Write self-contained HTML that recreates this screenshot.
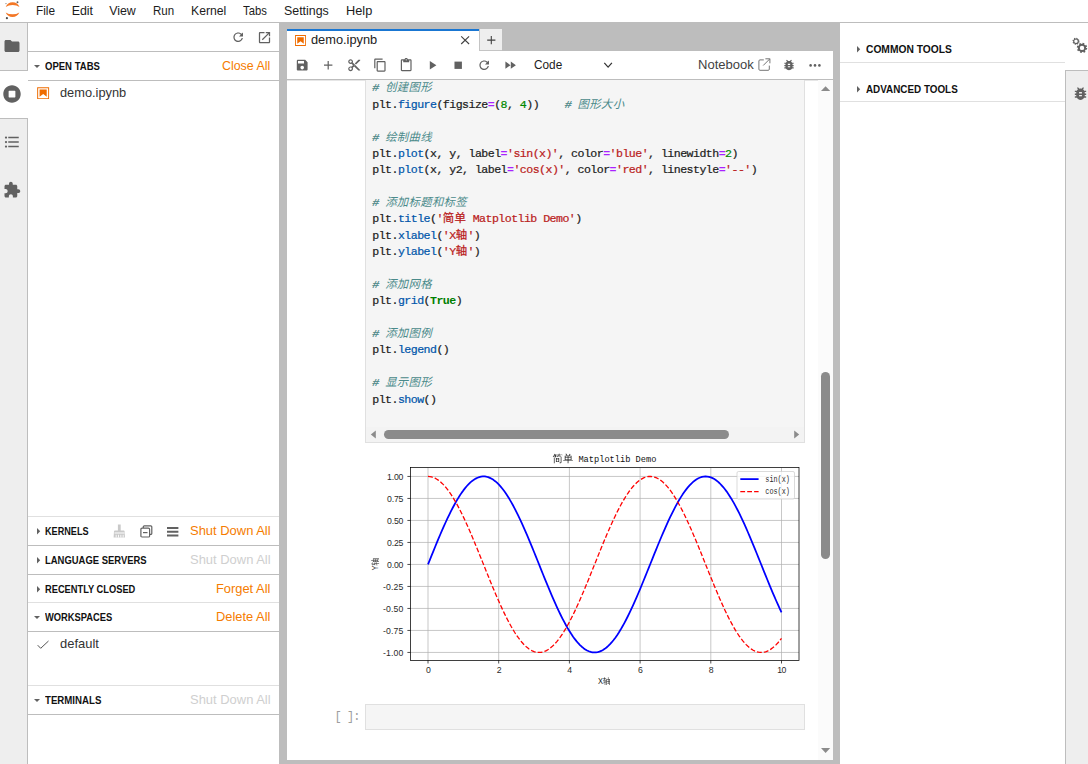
<!DOCTYPE html>
<html lang="zh">
<head>
<meta charset="utf-8">
<title>demo.ipynb - JupyterLab</title>
<style>
*{box-sizing:border-box;margin:0;padding:0}
html,body{width:1088px;height:764px;overflow:hidden;background:#fff}
body{position:relative;font-family:"Liberation Sans","Noto Sans CJK SC",sans-serif;color:#212121;font-size:12px}
.abs{position:absolute}
.t{position:absolute;white-space:nowrap;line-height:1}
.hl{position:absolute;height:1px}
.vl{position:absolute;width:1px}
svg{position:absolute;overflow:visible}
/* menu */
#menubar{position:absolute;left:0;top:0;width:1088px;height:23px;background:#fff;border-bottom:1px solid #bdbdbd}
.mi{position:absolute;top:4.2px;font-size:12.4px;line-height:14px;color:#1c1c1c;white-space:nowrap}
/* side bars */
#lbar{position:absolute;left:0;top:23px;width:28px;height:741px;background:#eeeeee;border-right:1px solid #bdbdbd}
#lactive{position:absolute;left:0;top:70px;width:28px;height:49px;background:#fff;border-top:1px solid #bdbdbd;border-bottom:1px solid #bdbdbd}
#rbar{position:absolute;left:1065px;top:23px;width:23px;height:741px;background:#eeeeee;border-left:1px solid #bdbdbd}
#ractive{position:absolute;left:1065px;top:23px;width:23px;height:48px;background:#fff;border-bottom:1px solid #bdbdbd}
/* panels */
#dock{position:absolute;left:279px;top:23px;width:561px;height:741px;background:#bdbdbd}
#nb{position:absolute;left:287px;top:51px;width:546px;height:709px;background:#fff}
.hdr{position:absolute;font-weight:bold;font-size:10.3px;color:#111;letter-spacing:0;white-space:nowrap;line-height:12px}
.act{position:absolute;font-size:12.6px;color:#f57c00;white-space:nowrap;line-height:14px}
.act.dis{color:#cfcfcf}
.it{position:absolute;font-size:12.4px;color:#333;white-space:nowrap;line-height:14px}
/* code */
#ed{position:absolute;left:365px;top:70px;width:440px;height:373px;background:#f5f5f5;border:1px solid #e0e0e0}
#code{position:absolute;left:372.3px;top:80.45px;font-family:"Liberation Mono","Noto Sans CJK SC",monospace;font-size:11.6px;letter-spacing:-0.545px;-webkit-text-stroke:0.22px;line-height:16.37px;color:#212121;white-space:pre}
#code i{color:#408080;font-style:italic}
#code b{font-weight:normal;letter-spacing:.3px;font-size:11.4px;-webkit-text-stroke:0}
#code i b{color:#4a8a8a}
#code .p{color:#0055aa}
#code .s{color:#ba2121}
#code .n{color:#008800}
#code .o{color:#aa22ff;font-weight:bold;-webkit-text-stroke:0}
#code .k{color:#008000;font-weight:bold;-webkit-text-stroke:0}
#code .s b{-webkit-text-stroke:0.25px}
</style>
<style>
.mi,.hdr,.act,.it,#pr{transform-origin:0 0}
#m1{transform:scaleX(.955)}#m4{transform:scaleX(.93)}#m5{transform:scaleX(.985)}#m6{transform:scaleX(.91)}#m8{transform:scaleX(1.03)}
#h1{transform:scaleX(.925)}#h2{transform:scaleX(.885)}#h3{transform:scaleX(.917)}#h4{transform:scaleX(.902)}#h5{transform:scaleX(.907)}#h6{transform:scaleX(.938)}#h7{transform:scaleX(.995)}#h8{transform:scaleX(.958)}
#a1{transform:scaleX(.985)}#i1,#tb1{transform:scaleX(1.033)}#i2{transform:scaleX(1.045)}
#a2,#a3,#a6{transform:scaleX(1.028)}#a4,#a5{transform:scaleX(1.022)}
#tc{transform:scaleX(.93)}#tn{transform:scaleX(1.027)}
</style>
</head>
<body>
<div id="menubar">
<svg style="left:4px;top:0.300px" width="18" height="21" viewBox="0 0 18 21">
  <path d="M1.7 7.0 A7.4 7.4 0 0 1 15.5 7.0 A9.5 6.2 0 0 0 1.7 7.0 Z" fill="#f37726"/>
  <path d="M1.7 12.4 A7.4 7.4 0 0 0 15.3 12.4 A9.5 6.2 0 0 1 1.7 12.4 Z" fill="#f37726"/>
  <circle cx="13.5" cy="2.2" r="0.95" fill="#616161"/>
  <circle cx="2.0" cy="3.6" r="0.6" fill="#767677"/>
  <circle cx="2.9" cy="18.2" r="1.1" fill="#4e4e4e"/>
</svg>
<span class="mi" style="left:35.700px" id="m1">File</span>
<span class="mi" style="left:71.7px" id="m2">Edit</span>
<span class="mi" style="left:109.2px" id="m3">View</span>
<span class="mi" style="left:153px" id="m4">Run</span>
<span class="mi" style="left:191.2px" id="m5">Kernel</span>
<span class="mi" style="left:243px" id="m6">Tabs</span>
<span class="mi" style="left:284px" id="m7">Settings</span>
<span class="mi" style="left:345.5px" id="m8">Help</span>
</div>
<div id="lbar"></div>
<div id="lactive"></div>
<!-- left activity icons -->
<svg style="left:3.1px;top:36.9px" width="18" height="18" viewBox="0 0 24 24"><path fill="#616161" d="M10 4H4c-1.1 0-1.99.9-1.99 2L2 18c0 1.1.9 2 2 2h16c1.1 0 2-.9 2-2V8c0-1.1-.9-2-2-2h-8l-2-2z"/></svg>
<svg style="left:3.2px;top:84.9px" width="18" height="18" viewBox="0 0 512 512"><path fill="#616161" d="M256 8C119 8 8 119 8 256s111 248 248 248 248-111 248-248S393 8 256 8zm96 328c0 8.8-7.2 16-16 16H176c-8.8 0-16-7.2-16-16V176c0-8.8 7.2-16 16-16h160c8.8 0 16 7.2 16 16v160z"/></svg>
<svg style="left:3px;top:133px" width="18" height="18" viewBox="0 0 24 24"><path fill="#616161" d="M7,5H21V7H7V5M7,13V11H21V13H7M4,4.5A1.5,1.5 0 0,1 5.5,6A1.5,1.5 0 0,1 4,7.5A1.5,1.5 0 0,1 2.5,6A1.5,1.5 0 0,1 4,4.5M4,10.5A1.5,1.5 0 0,1 5.5,12A1.5,1.5 0 0,1 4,13.5A1.5,1.5 0 0,1 2.5,12A1.5,1.5 0 0,1 4,10.5M7,19V17H21V19H7M4,16.5A1.5,1.5 0 0,1 5.5,18A1.5,1.5 0 0,1 4,19.5A1.5,1.5 0 0,1 2.5,18A1.5,1.5 0 0,1 4,16.5Z"/></svg>
<svg style="left:2.6px;top:181.2px" width="18" height="18" viewBox="0 0 24 24"><path fill="#616161" d="M20.5 11H19V7c0-1.1-.9-2-2-2h-4V3.5C13 2.12 11.88 1 10.5 1S8 2.12 8 3.5V5H4c-1.1 0-1.99.9-1.99 2v3.8H3.5c1.49 0 2.7 1.21 2.7 2.7s-1.21 2.7-2.7 2.7H2V20c0 1.1.9 2 2 2h3.8v-1.5c0-1.49 1.21-2.7 2.7-2.7 1.49 0 2.7 1.21 2.7 2.7V22H17c1.1 0 2-.9 2-2v-4h1.5c1.380 0 2.5-1.12 2.5-2.5S21.88 11 20.5 11z"/></svg>

<!-- left side panel (running sessions) -->
<div class="hl" style="left:28px;top:51px;width:251px;background:#bdbdbd"></div>
<svg style="left:231px;top:29.8px" width="14.4" height="14.4" viewBox="0 0 18 18"><path fill="#616161" d="M9 13.5c-2.49 0-4.5-2.01-4.5-4.5S6.51 4.500 9 4.5c1.24 0 2.36.52 3.17 1.33L10 8h5V3l-1.76 1.76C12.15 3.68 10.66 3 9 3 5.69 3 3.010 5.69 3.010 9S5.69 15 9 15c2.97 0 5.43-2.16 5.9-5h-1.52c-.46 2-2.24 3.5-4.38 3.5z"/></svg>
<svg style="left:256.9px;top:29.6px" width="15" height="15" viewBox="0 0 24 24"><path fill="#616161" d="M19 19H5V5h7V3H5c-1.11 0-2 .9-2 2v14c0 1.1.89 2 2 2h14c1.1 0 2-.9 2-2v-7h-2v7zM14 3v2h3.59l-9.83 9.83 1.41 1.41L19 6.410V10h2V3h-7z"/></svg>

<!-- OPEN TABS -->
<svg style="left:34px;top:65px" width="6" height="3" viewBox="0 0 6 3"><path fill="#616161" d="M0 0h6L3 3z"/></svg>
<span class="hdr" style="left:44.6px;top:60.8px" id="h1">OPEN TABS</span>
<span class="act" style="left:221.8px;top:58.6px" id="a1">Close All</span>
<div class="hl" style="left:28px;top:80px;width:251px;background:#bdbdbd"></div>
<svg style="left:35.8px;top:85.7px" width="14.3" height="14.3" viewBox="0 0 22 22"><path fill="#ef6c00" d="M18.7 3.3v15.4H3.3V3.3h15.4m1.5-1.500H1.800v18.3h18.3l.1-18.3z"/><path fill="#ef6c00" d="M16.500 16.500l-5.400-4.300-5.600 4.300v-11h11z"/></svg>
<span class="it" style="left:59.8px;top:85.8px" id="i1">demo.ipynb</span>

<!-- KERNELS -->
<div class="hl" style="left:28px;top:516px;width:251px;background:#e0e0e0"></div>
<svg style="left:36.8px;top:528px" width="3.2" height="6.4" viewBox="0 0 3 6"><path fill="#616161" d="M0 0v6l3-3z"/></svg>
<span class="hdr" style="left:44.6px;top:525.8px" id="h2">KERNELS</span>
<svg style="left:113px;top:524px" width="13" height="14" viewBox="0 0 13 14"><path fill="#c9c9c9" d="M4.900 0.600h2.800v6.200h-2.800zM1.900 6.400h8.800q.8 0 .9 .8l.4 6.300h-11.400l.4-6.300q.1-.8 .9-.8z"/><path fill="#fff" d="M2.700 10.800h.9v2.700h-.9zM5.100 10.800h.9v2.700h-.9zM7.400 10.800h.9v2.700h-.9zM9.700 10.800h.9v2.700h-.9zM1.500 8.600h10v.8h-10z"/></svg>
<svg style="left:139.500px;top:525px" width="13" height="13" viewBox="0 0 13 13"><path fill="none" stroke="#616161" stroke-width="1.200" d="M3.300 3.100v-1.300q0-1 1-1h6.500q1 0 1 1v6.600q0 1-1 1h-1.200"/><rect x="0.900" y="3.100" width="8.700" height="8.900" rx="1.100" fill="#fff" stroke="#616161" stroke-width="1.200"/><path stroke="#616161" stroke-width="1.200" d="M3 7.600h4.500"/></svg>
<svg style="left:166.600px;top:526.600px" width="11.400" height="9.600" viewBox="0 0 11.400 9.600"><path fill="#616161" d="M0 0h11.400v2.100H0zM0 3.700h11.400v2.100H0zM0 7.400h11.400v2.100H0z"/></svg>
<span class="act" style="left:190.400px;top:523.600px" id="a2">Shut Down All</span>
<div class="hl" style="left:28px;top:545px;width:251px;background:#bdbdbd"></div>

<!-- LANGUAGE SERVERS -->
<svg style="left:36.8px;top:557px" width="3.2" height="6.4" viewBox="0 0 3 6"><path fill="#616161" d="M0 0v6l3-3z"/></svg>
<span class="hdr" style="left:44.6px;top:554.8px" id="h3">LANGUAGE SERVERS</span>
<span class="act dis" style="left:190.400px;top:552.600px" id="a3">Shut Down All</span>
<div class="hl" style="left:28px;top:574px;width:251px;background:#bdbdbd"></div>

<!-- RECENTLY CLOSED -->
<svg style="left:36.8px;top:585.500px" width="3.2" height="6.4" viewBox="0 0 3 6"><path fill="#616161" d="M0 0v6l3-3z"/></svg>
<span class="hdr" style="left:44.6px;top:583.5px" id="h4">RECENTLY CLOSED</span>
<span class="act" style="left:216.200px;top:582.100px" id="a4">Forget All</span>
<div class="hl" style="left:28px;top:602px;width:251px;background:#e0e0e0"></div>

<!-- WORKSPACES -->
<svg style="left:34px;top:616px" width="6" height="3" viewBox="0 0 6 3"><path fill="#616161" d="M0 0h6L3 3z"/></svg>
<span class="hdr" style="left:44.6px;top:611.8px" id="h5">WORKSPACES</span>
<span class="act" style="left:216.200px;top:609.600px" id="a5">Delete All</span>
<div class="hl" style="left:28px;top:631px;width:251px;background:#bdbdbd"></div>
<svg style="left:37px;top:639.500px" width="13" height="10" viewBox="0 0 13 10"><path fill="none" stroke="#555" stroke-width="1" d="M0.700 5.200l3 3.100l7.800-7.300"/></svg>
<span class="it" style="left:59.8px;top:636.800px" id="i2">default</span>

<!-- TERMINALS -->
<div class="hl" style="left:28px;top:685px;width:251px;background:#e0e0e0"></div>
<svg style="left:34px;top:699px" width="6" height="3" viewBox="0 0 6 3"><path fill="#616161" d="M0 0h6L3 3z"/></svg>
<span class="hdr" style="left:44.6px;top:694.8px" id="h6">TERMINALS</span>
<span class="act dis" style="left:190.400px;top:692.600px" id="a6">Shut Down All</span>
<div class="hl" style="left:28px;top:714px;width:251px;background:#bdbdbd"></div>
<div id="dock"></div>
<!-- tab -->
<div class="abs" style="left:287px;top:29px;width:192px;height:22px;background:#fff;border-top:2px solid #1976d2"></div>
<div class="abs" style="left:479px;top:29px;width:23px;height:22px;background:#eeeeee;border-left:1px solid #c4c4c4;border-bottom:1px solid #c4c4c4"></div>
<svg style="left:293.700px;top:33.950px" width="13" height="13" viewBox="0 0 22 22"><path fill="#ef6c00" d="M18.7 3.3v15.4H3.3V3.3h15.4m1.5-1.500H1.800v18.3h18.3l.1-18.3z"/><path fill="#ef6c00" d="M16.500 16.500l-5.400-4.300-5.600 4.300v-11h11z"/></svg>
<span class="it" style="left:311px;top:33.400px;color:#222" id="tb1">demo.ipynb</span>
<svg style="left:460px;top:35px" width="10" height="10" viewBox="0 0 10 10"><path stroke="#424242" stroke-width="1.100" fill="none" d="M1.200 1.300l7.900 7.700M9.100 1.300l-7.900 7.700"/></svg>
<svg style="left:486px;top:35px" width="10" height="10" viewBox="0 0 10 10"><path stroke="#424242" stroke-width="1.100" fill="none" d="M5.300 1v8.200M1.200 5.100h8.200"/></svg>

<!-- notebook panel -->
<div id="nb"></div>
<div class="hl" style="left:287px;top:79px;width:546px;background:#bdbdbd"></div>
<div class="hl" style="left:287px;top:80px;width:546px;background:#e6e6e6"></div>

<!-- toolbar icons -->
<svg style="left:295px;top:58.100px" width="14.400" height="14.400" viewBox="0 0 24 24"><path fill="#616161" d="M17 3H5c-1.110 0-2 .9-2 2v14c0 1.100.890 2 2 2h14c1.100 0 2-.9 2-2V7l-4-4zm-5 16c-1.660 0-3-1.340-3-3s1.340-3 3-3 3 1.340 3 3-1.340 3-3 3zm3-10H5V5h10v4z"/></svg>
<svg style="left:320.800px;top:58.300px" width="14.400" height="14.400" viewBox="0 0 24 24"><path fill="#616161" d="M19 13h-6v6h-2v-6H5v-2h6V5h2v6h6v2z"/></svg>
<svg style="left:347px;top:57.800px" width="14.400" height="14.400" viewBox="0 0 24 24"><path fill="#616161" d="M9.640 7.640c.23-.5.360-1.050.360-1.640 0-2.210-1.790-4-4-4S2 3.790 2 6s1.790 4 4 4c.59 0 1.140-.13 1.640-.36L10 12l-2.360 2.360C7.140 14.130 6.590 14 6 14c-2.210 0-4 1.790-4 4s1.790 4 4 4 4-1.790 4-4c0-.59-.13-1.140-.36-1.640L12 14l7 7h3v-1L9.640 7.640zM6 8c-1.100 0-2-.89-2-2s.9-2 2-2 2 .89 2 2-.9 2-2 2zm0 12c-1.100 0-2-.89-2-2s.9-2 2-2 2 .89 2 2-.9 2-2 2zm6-7.500c-.28 0-.5-.22-.5-.5s.22-.5.5-.5.5.22.5.5-.22.5-.5.5zM19 3l-6 6 2 2 7-7V3z"/></svg>
<svg style="left:373px;top:58.300px" width="14.400" height="14.400" viewBox="0 0 24 24"><path fill="#616161" d="M16 1H4c-1.100 0-2 .9-2 2v14h2V3h12V1zm3 4H8c-1.100 0-2 .9-2 2v14c0 1.100.9 2 2 2h11c1.100 0 2-.9 2-2V7c0-1.100-.9-2-2-2zm0 16H8V7h11v14z"/></svg>
<svg style="left:399px;top:58.200px" width="14.400" height="14.400" viewBox="0 0 24 24"><path fill="#616161" d="M19 2h-4.180C14.400.84 13.300 0 12 0c-1.300 0-2.400.84-2.820 2H5c-1.100 0-2 .9-2 2v16c0 1.100.9 2 2 2h14c1.100 0 2-.9 2-2V4c0-1.100-.9-2-2-2zm-7 0c.55 0 1 .45 1 1s-.45 1-1 1-1-.45-1-1 .45-1 1-1zm7 18H5V4h2v3h10V4h2v16z"/></svg>
<svg style="left:424.900px;top:58.050px" width="14.400" height="14.400" viewBox="0 0 24 24"><path fill="#616161" d="M8 5v14l11-7z"/></svg>
<svg style="left:451px;top:57.950px" width="14.400" height="14.400" viewBox="0 0 24 24"><path fill="#616161" d="M5.800 6h12.400v12.200H5.800z"/></svg>
<svg style="left:477px;top:57.800px" width="14.400" height="14.400" viewBox="0 0 18 18"><path fill="#616161" d="M9 13.500c-2.490 0-4.500-2.010-4.500-4.500S6.510 4.500 9 4.500c1.240 0 2.360.52 3.170 1.330L10 8h5V3l-1.760 1.760C12.150 3.680 10.660 3 9 3 5.690 3 3.010 5.690 3.010 9S5.690 15 9 15c2.970 0 5.430-2.160 5.900-5h-1.520c-.46 2-2.240 3.500-4.380 3.500z"/></svg>
<svg style="left:502.700px;top:58.050px" width="14.400" height="14.400" viewBox="0 0 24 24"><path fill="#616161" d="M4 18l8.500-6L4 6v12zm9-12v12l8.500-6L13 6z"/></svg>
<span class="it" style="left:534.400px;top:57.700px;font-size:12.700px;color:#1c1c1c" id="tc">Code</span>
<svg style="left:603px;top:61px" width="10" height="8" viewBox="0 0 10 8"><path stroke="#333" stroke-width="1.250" fill="none" d="M1.300 1.900l3.800 4.200l3.800-4.200"/></svg>
<span class="it" style="left:697.800px;top:57.700px;font-size:12.700px;color:#424242" id="tn">Notebook</span>
<svg style="left:758px;top:58px" width="13" height="13" viewBox="0 0 13 13"><path stroke="#757575" stroke-width="1" fill="none" d="M5.800 1.900H2q-1.100 0-1.100 1.100v8.200q0 1.100 1.100 1.100h8.200q1.100 0 1.100-1.100V7.600M7.400 0.800h4.500v4.500M11.800 0.900L5.200 7.500"/></svg>
<svg style="left:781.900px;top:58.300px" width="14" height="14" viewBox="0 0 24 24"><path fill="#616161" d="M20 8h-2.810c-.45-.78-1.070-1.450-1.820-1.960L17 4.410 15.590 3l-2.170 2.170C12.960 5.060 12.490 5 12 5c-.49 0-.96.060-1.410.17L8.410 3 7 4.410l1.620 1.630C7.880 6.550 7.260 7.220 6.810 8H4v2h2.090c-.05.33-.09.66-.09 1v1H4v2h2v1c0 .34.040.67.090 1H4v2h2.810c1.040 1.790 2.970 3 5.190 3s4.150-1.210 5.190-3H20v-2h-2.090c.05-.33.090-.66.090-1v-1h2v-2h-2v-1c0-.34-.04-.67-.09-1H20V8zm-6 8h-4v-2h4v2zm0-4h-4v-2h4v2z"/></svg>
<svg style="left:808px;top:63px" width="14" height="5" viewBox="0 0 14 5"><circle cx="2.600" cy="2.400" r="1.300" fill="#616161"/><circle cx="7" cy="2.400" r="1.300" fill="#616161"/><circle cx="11.400" cy="2.400" r="1.300" fill="#616161"/></svg>
<div class="abs" style="left:365px;top:80px;width:440px;height:363px;background:#f5f5f5;border:1px solid #e0e0e0;border-top:none"></div>
<div id="code"><i># <b>创建图形</b></i>
plt.<span class="p">figure</span>(figsize<span class="o">=</span>(<span class="n">8</span>, <span class="n">4</span>))    <i># <b>图形大小</b></i>

<i># <b>绘制曲线</b></i>
plt.<span class="p">plot</span>(x, y, label<span class="o">=</span><span class="s">'sin(x)'</span>, color<span class="o">=</span><span class="s">'blue'</span>, linewidth<span class="o">=</span><span class="n">2</span>)
plt.<span class="p">plot</span>(x, y2, label<span class="o">=</span><span class="s">'cos(x)'</span>, color<span class="o">=</span><span class="s">'red'</span>, linestyle<span class="o">=</span><span class="s">'--'</span>)

<i># <b>添加标题和标签</b></i>
plt.<span class="p">title</span>(<span class="s">'<b>简单</b> Matplotlib Demo'</span>)
plt.<span class="p">xlabel</span>(<span class="s">'X<b>轴</b>'</span>)
plt.<span class="p">ylabel</span>(<span class="s">'Y<b>轴</b>'</span>)

<i># <b>添加网格</b></i>
plt.<span class="p">grid</span>(<span class="k">True</span>)

<i># <b>添加图例</b></i>
plt.<span class="p">legend</span>()

<i># <b>显示图形</b></i>
plt.<span class="p">show</span>()</div>
<div class="abs" style="left:366px;top:427px;width:438px;height:15px;background:#f3f3f3"></div>
<svg style="left:370px;top:430px" width="7" height="9" viewBox="0 0 7 9"><path fill="#8b8b8b" d="M5.800 0.600v7.800L0.800 4.500z"/></svg>
<svg style="left:792.500px;top:430px" width="7" height="9" viewBox="0 0 7 9"><path fill="#8b8b8b" d="M1.200 0.600v7.800L6.200 4.500z"/></svg>
<div class="abs" style="left:384px;top:429.800px;width:345px;height:9.200px;border-radius:4.600px;background:#8b8b8b"></div>
<div class="abs" style="left:818px;top:80px;width:15px;height:680px;background:#fbfbfb"></div>
<svg style="left:820px;top:85px" width="11" height="8" viewBox="0 0 11 8"><path fill="#8b8b8b" d="M1 6.100h9.200L5.600 1.300z"/></svg>
<svg style="left:820px;top:746px" width="11" height="8" viewBox="0 0 11 8"><path fill="#8b8b8b" d="M1 1.900h9.200L5.600 6.900z"/></svg>
<div class="abs" style="left:821px;top:372px;width:9.200px;height:186.500px;border-radius:4.600px;background:#8b8b8b"></div>
<div class="abs" style="left:365px;top:704px;width:440px;height:26px;background:#f5f5f5;border:1px solid #e0e0e0"></div>
<span class="t" id="pr" style="left:334.600px;top:710.700px;font-family:'Liberation Mono',monospace;font-size:12px;letter-spacing:-1px;color:#9e9e9e;line-height:13px">[ ]:</span>
<svg style="left:0;top:0" width="1088" height="764" viewBox="0 0 1088 764" font-family="'Liberation Mono','WenQuanYi Zen Hei','Noto Sans CJK SC',monospace">
<rect x="410.4" y="467.6" width="388.6" height="192.9" fill="#fff"/>
<path d="M428.00 467.6V660.5M498.70 467.6V660.5M569.40 467.6V660.5M640.10 467.6V660.5M710.80 467.6V660.5M781.50 467.6V660.5M410.4 652.45H799.0M410.4 630.45H799.0M410.4 608.45H799.0M410.4 586.45H799.0M410.4 564.45H799.0M410.4 542.45H799.0M410.4 520.45H799.0M410.4 498.45H799.0M410.4 476.45H799.0" stroke="#b0b0b0" stroke-width="0.700" fill="none"/>
<path d="M428.00 660.5v3M498.70 660.5v3M569.40 660.5v3M640.10 660.5v3M710.80 660.5v3M781.50 660.5v3M410.4 652.45h-3M410.4 630.45h-3M410.4 608.45h-3M410.4 586.45h-3M410.4 564.45h-3M410.4 542.45h-3M410.4 520.45h-3M410.4 498.45h-3M410.4 476.45h-3" stroke="#000" stroke-width="0.700" fill="none"/>
<path d="M428.00 564.45L429.77 560.05L431.54 555.66L433.30 551.30L435.07 546.97L436.84 542.68L438.61 538.44L440.37 534.27L442.14 530.18L443.91 526.17L445.68 522.26L447.44 518.45L449.21 514.76L450.98 511.19L452.75 507.76L454.51 504.47L456.28 501.32L458.05 498.34L459.81 495.52L461.58 492.87L463.35 490.40L465.12 488.12L466.88 486.02L468.65 484.13L470.42 482.43L472.19 480.94L473.95 479.66L475.72 478.59L477.49 477.73L479.26 477.09L481.02 476.67L482.79 476.47L484.56 476.49L486.33 476.73L488.10 477.18L489.86 477.86L491.63 478.75L493.40 479.86L495.17 481.18L496.93 482.70L498.70 484.43L500.47 486.36L502.24 488.49L504.00 490.80L505.77 493.30L507.54 495.98L509.31 498.83L511.07 501.84L512.84 505.01L514.61 508.33L516.38 511.78L518.14 515.37L519.91 519.09L521.68 522.91L523.45 526.84L525.21 530.86L526.98 534.97L528.75 539.15L530.51 543.40L532.28 547.69L534.05 552.03L535.82 556.40L537.59 560.79L539.35 565.19L541.12 569.59L542.89 573.97L544.65 578.33L546.42 582.66L548.19 586.94L549.96 591.16L551.73 595.32L553.49 599.40L555.26 603.39L557.03 607.29L558.80 611.08L560.56 614.75L562.33 618.29L564.10 621.71L565.87 624.97L567.63 628.09L569.40 631.05L571.17 633.84L572.93 636.46L574.70 638.90L576.47 641.15L578.24 643.21L580.00 645.07L581.77 646.73L583.54 648.19L585.31 649.44L587.08 650.47L588.84 651.29L590.61 651.89L592.38 652.28L594.14 652.44L595.91 652.39L597.68 652.11L599.45 651.62L601.22 650.91L602.98 649.98L604.75 648.84L606.52 647.48L608.28 645.92L610.05 644.16L611.82 642.19L613.59 640.04L615.36 637.69L617.12 635.16L618.89 632.45L620.66 629.58L622.42 626.54L624.19 623.34L625.96 620.00L627.73 616.52L629.50 612.91L631.26 609.18L633.03 605.33L634.80 601.39L636.57 597.35L638.33 593.23L640.10 589.04L641.87 584.78L643.63 580.48L645.40 576.14L647.17 571.76L648.94 567.37L650.71 562.97L652.47 558.57L654.24 554.19L656.01 549.84L657.77 545.52L659.54 541.25L661.31 537.03L663.08 532.89L664.85 528.82L666.61 524.85L668.38 520.97L670.15 517.20L671.91 513.55L673.68 510.02L675.45 506.64L677.22 503.39L678.99 500.30L680.75 497.37L682.52 494.61L684.29 492.02L686.06 489.61L687.82 487.39L689.59 485.36L691.36 483.53L693.12 481.91L694.89 480.48L696.66 479.27L698.43 478.27L700.19 477.49L701.96 476.93L703.73 476.58L705.50 476.45L707.27 476.54L709.03 476.86L710.80 477.39L712.57 478.14L714.34 479.10L716.10 480.28L717.87 481.67L719.64 483.26L721.40 485.06L723.17 487.06L724.94 489.25L726.71 491.62L728.48 494.18L730.24 496.92L732.01 499.82L733.78 502.89L735.54 506.11L737.31 509.47L739.08 512.98L740.85 516.61L742.62 520.36L744.38 524.22L746.15 528.18L747.92 532.24L749.68 536.37L751.45 540.57L753.22 544.84L754.99 549.15L756.76 553.50L758.52 557.88L760.29 562.27L762.06 566.67L763.83 571.06L765.59 575.44L767.36 579.79L769.13 584.10L770.89 588.36L772.66 592.57L774.43 596.70L776.20 600.75L777.97 604.71L779.73 608.57L781.50 612.32" stroke="#0000ff" stroke-width="1.750" fill="none" stroke-linejoin="round"/>
<path d="M428.00 476.45L429.77 476.56L431.54 476.89L433.30 477.44L435.07 478.20L436.84 479.19L438.61 480.38L440.37 481.79L442.14 483.40L443.91 485.21L445.68 487.22L447.44 489.43L449.21 491.82L450.98 494.39L452.75 497.14L454.51 500.06L456.28 503.14L458.05 506.37L459.81 509.75L461.58 513.26L463.35 516.90L465.12 520.66L466.88 524.53L468.65 528.50L470.42 532.56L472.19 536.70L473.95 540.91L475.72 545.18L477.49 549.49L479.26 553.85L481.02 558.23L482.79 562.62L484.56 567.02L486.33 571.41L488.10 575.79L489.86 580.14L491.63 584.44L493.40 588.70L495.17 592.90L496.93 597.03L498.70 601.07L500.47 605.02L502.24 608.88L504.00 612.62L505.77 616.24L507.54 619.73L509.31 623.08L511.07 626.29L512.84 629.34L514.61 632.23L516.38 634.95L518.14 637.49L519.91 639.86L521.68 642.03L523.45 644.01L525.21 645.79L526.98 647.37L528.75 648.74L530.51 649.89L532.28 650.84L534.05 651.57L535.82 652.08L537.59 652.37L539.35 652.45L541.12 652.30L542.89 651.93L544.65 651.35L546.42 650.55L548.19 649.53L549.96 648.30L551.73 646.86L553.49 645.21L555.26 643.36L557.03 641.32L558.80 639.08L560.56 636.66L562.33 634.06L564.10 631.28L565.87 628.33L567.63 625.23L569.40 621.97L571.17 618.57L572.93 615.03L574.70 611.37L576.47 607.59L578.24 603.71L580.00 599.72L581.77 595.65L583.54 591.50L585.31 587.28L587.08 583.00L588.84 578.68L590.61 574.32L592.38 569.94L594.14 565.54L595.91 561.14L597.68 556.75L599.45 552.38L601.22 548.04L602.98 543.74L604.75 539.49L606.52 535.30L608.28 531.19L610.05 527.16L611.82 523.22L613.59 519.39L615.36 515.67L617.12 512.07L618.89 508.60L620.66 505.27L622.42 502.09L624.19 499.06L625.96 496.20L627.73 493.51L629.50 491.00L631.26 488.67L633.03 486.52L634.80 484.58L636.57 482.83L638.33 481.29L640.10 479.96L641.87 478.83L643.63 477.92L645.40 477.23L647.17 476.75L648.94 476.50L650.71 476.46L652.47 476.65L654.24 477.05L656.01 477.67L657.77 478.51L659.54 479.56L661.31 480.83L663.08 482.30L664.85 483.98L666.61 485.87L668.38 487.94L670.15 490.21L671.91 492.67L673.68 495.30L675.45 498.11L677.22 501.08L678.99 504.21L680.75 507.49L682.52 510.92L684.29 514.47L686.06 518.16L687.82 521.95L689.59 525.86L691.36 529.86L693.12 533.95L694.89 538.11L696.66 542.34L698.43 546.62L700.19 550.95L701.96 555.32L703.73 559.70L705.50 564.10L707.27 568.50L709.03 572.89L710.80 577.25L712.57 581.59L714.34 585.88L716.10 590.12L717.87 594.30L719.64 598.40L721.40 602.41L723.17 606.33L724.94 610.15L726.71 613.85L728.48 617.43L730.24 620.87L732.01 624.18L733.78 627.33L735.54 630.33L737.31 633.16L739.08 635.83L740.85 638.31L742.62 640.61L744.38 642.72L746.15 644.63L747.92 646.34L749.68 647.85L751.45 649.15L753.22 650.24L754.99 651.11L756.76 651.77L758.52 652.20L760.29 652.42L762.06 652.42L763.83 652.20L765.59 651.76L767.36 651.10L769.13 650.23L770.89 649.14L772.66 647.84L774.43 646.33L776.20 644.61L777.97 642.70L779.73 640.59L781.50 638.29" stroke="#ff0000" stroke-width="1.300" fill="none" stroke-dasharray="4.800 2.100"/>
<rect x="410.4" y="467.6" width="388.6" height="192.9" fill="none" stroke="#000" stroke-width="0.750"/>
<text x="403.4" y="655.55" text-anchor="end" font-family="'Liberation Sans',sans-serif" font-size="8.700" fill="#2a2a2a" textLength="20.5" lengthAdjust="spacing">-1.00</text>
<text x="403.4" y="633.55" text-anchor="end" font-family="'Liberation Sans',sans-serif" font-size="8.700" fill="#2a2a2a" textLength="20.5" lengthAdjust="spacing">-0.75</text>
<text x="403.4" y="611.55" text-anchor="end" font-family="'Liberation Sans',sans-serif" font-size="8.700" fill="#2a2a2a" textLength="20.5" lengthAdjust="spacing">-0.50</text>
<text x="403.4" y="589.55" text-anchor="end" font-family="'Liberation Sans',sans-serif" font-size="8.700" fill="#2a2a2a" textLength="20.5" lengthAdjust="spacing">-0.25</text>
<text x="403.4" y="567.55" text-anchor="end" font-family="'Liberation Sans',sans-serif" font-size="8.700" fill="#2a2a2a" textLength="16.4" lengthAdjust="spacing">0.00</text>
<text x="403.4" y="545.55" text-anchor="end" font-family="'Liberation Sans',sans-serif" font-size="8.700" fill="#2a2a2a" textLength="16.4" lengthAdjust="spacing">0.25</text>
<text x="403.4" y="523.55" text-anchor="end" font-family="'Liberation Sans',sans-serif" font-size="8.700" fill="#2a2a2a" textLength="16.4" lengthAdjust="spacing">0.50</text>
<text x="403.4" y="501.55" text-anchor="end" font-family="'Liberation Sans',sans-serif" font-size="8.700" fill="#2a2a2a" textLength="16.4" lengthAdjust="spacing">0.75</text>
<text x="403.4" y="479.55" text-anchor="end" font-family="'Liberation Sans',sans-serif" font-size="8.700" fill="#2a2a2a" textLength="16.4" lengthAdjust="spacing">1.00</text>
<text x="428.00" y="673.1" text-anchor="middle" font-family="'Liberation Sans',sans-serif" font-size="8.700" letter-spacing="-0.700" fill="#2a2a2a">0</text>
<text x="498.70" y="673.1" text-anchor="middle" font-family="'Liberation Sans',sans-serif" font-size="8.700" letter-spacing="-0.700" fill="#2a2a2a">2</text>
<text x="569.40" y="673.1" text-anchor="middle" font-family="'Liberation Sans',sans-serif" font-size="8.700" letter-spacing="-0.700" fill="#2a2a2a">4</text>
<text x="640.10" y="673.1" text-anchor="middle" font-family="'Liberation Sans',sans-serif" font-size="8.700" letter-spacing="-0.700" fill="#2a2a2a">6</text>
<text x="710.80" y="673.1" text-anchor="middle" font-family="'Liberation Sans',sans-serif" font-size="8.700" letter-spacing="-0.700" fill="#2a2a2a">8</text>
<text x="781.50" y="673.1" text-anchor="middle" font-family="'Liberation Sans',sans-serif" font-size="8.700" letter-spacing="-0.700" fill="#2a2a2a">10</text>
<text x="552.600" y="461.800" font-size="10.300" fill="#111" font-family="'WenQuanYi Zen Hei','Noto Sans CJK SC',sans-serif">简单</text>
<text x="578.400" y="461.700" font-size="9.300" fill="#111" textLength="78" lengthAdjust="spacingAndGlyphs">Matplotlib Demo</text>
<text x="604.300" y="683.600" text-anchor="middle" font-size="8.400" fill="#222" font-family="'Liberation Sans','WenQuanYi Zen Hei','Noto Sans CJK SC',sans-serif" textLength="12.500" lengthAdjust="spacingAndGlyphs">X轴</text>
<text transform="translate(378.200 564.200) rotate(-90)" text-anchor="middle" font-size="8.400" fill="#222" font-family="'Liberation Sans','WenQuanYi Zen Hei','Noto Sans CJK SC',sans-serif" textLength="12.500" lengthAdjust="spacingAndGlyphs">Y轴</text>
<rect x="737" y="471.500" width="57.500" height="27.500" rx="1.500" fill="#fff" fill-opacity="0.800" stroke="#cccccc" stroke-width="0.700"/>
<path d="M740.300 479.100H758.600" stroke="#0000ff" stroke-width="1.750"/>
<path d="M740.300 491.600H758.600" stroke="#ff0000" stroke-width="1.300" stroke-dasharray="4.800 2.100"/>
<text x="765.300" y="481.900" font-size="8.200" fill="#2a2a2a" textLength="24.600" lengthAdjust="spacingAndGlyphs">sin(x)</text>
<text x="765.300" y="494.400" font-size="8.200" fill="#2a2a2a" textLength="24.600" lengthAdjust="spacingAndGlyphs">cos(x)</text>
</svg>
<!-- right panel (property inspector) -->
<svg style="left:856.700px;top:46px" width="3.200" height="6.400" viewBox="0 0 3 6"><path fill="#616161" d="M0 0v6l3-3z"/></svg>
<span class="hdr" style="left:865.600px;top:43.6px" id="h7">COMMON TOOLS</span>
<div class="hl" style="left:840px;top:62px;width:225px;background:#e0e0e0"></div>
<svg style="left:856.700px;top:85.800px" width="3.200" height="6.400" viewBox="0 0 3 6"><path fill="#616161" d="M0 0v6l3-3z"/></svg>
<span class="hdr" style="left:865.600px;top:83.5px" id="h8">ADVANCED TOOLS</span>
<div class="hl" style="left:840px;top:101px;width:225px;background:#e0e0e0"></div>
<div id="rbar"></div>
<div id="ractive"></div>
<!-- gears -->
<svg style="left:1070px;top:36px" width="18" height="18" viewBox="0 0 18 18">
 <circle cx="6" cy="5.300" r="2.300" fill="none" stroke="#616161" stroke-width="1.200"/>
 <circle cx="6" cy="5.300" r="2.900" fill="none" stroke="#616161" stroke-width="1.300" stroke-dasharray="1.140 1.140"/>
 <circle cx="12" cy="11.900" r="3.200" fill="none" stroke="#616161" stroke-width="2"/>
 <circle cx="12" cy="11.900" r="4.300" fill="none" stroke="#616161" stroke-width="1.800" stroke-dasharray="1.690 1.690"/>
</svg>
<svg style="left:1071.800px;top:85.400px" width="17" height="17" viewBox="0 0 24 24"><path fill="#616161" d="M20 8h-2.810c-.45-.78-1.070-1.450-1.820-1.960L17 4.410 15.590 3l-2.170 2.170C12.960 5.060 12.490 5 12 5c-.49 0-.96.060-1.410.17L8.410 3 7 4.410l1.620 1.630C7.880 6.550 7.260 7.220 6.810 8H4v2h2.090c-.05.33-.09.66-.09 1v1H4v2h2v1c0 .34.040.67.090 1H4v2h2.810c1.040 1.790 2.970 3 5.190 3s4.150-1.210 5.190-3H20v-2h-2.090c.05-.33.090-.66.090-1v-1h2v-2h-2v-1c0-.34-.04-.67-.09-1H20V8zm-6 8h-4v-2h4v2zm0-4h-4v-2h4v2z"/></svg>
</body>
</html>
